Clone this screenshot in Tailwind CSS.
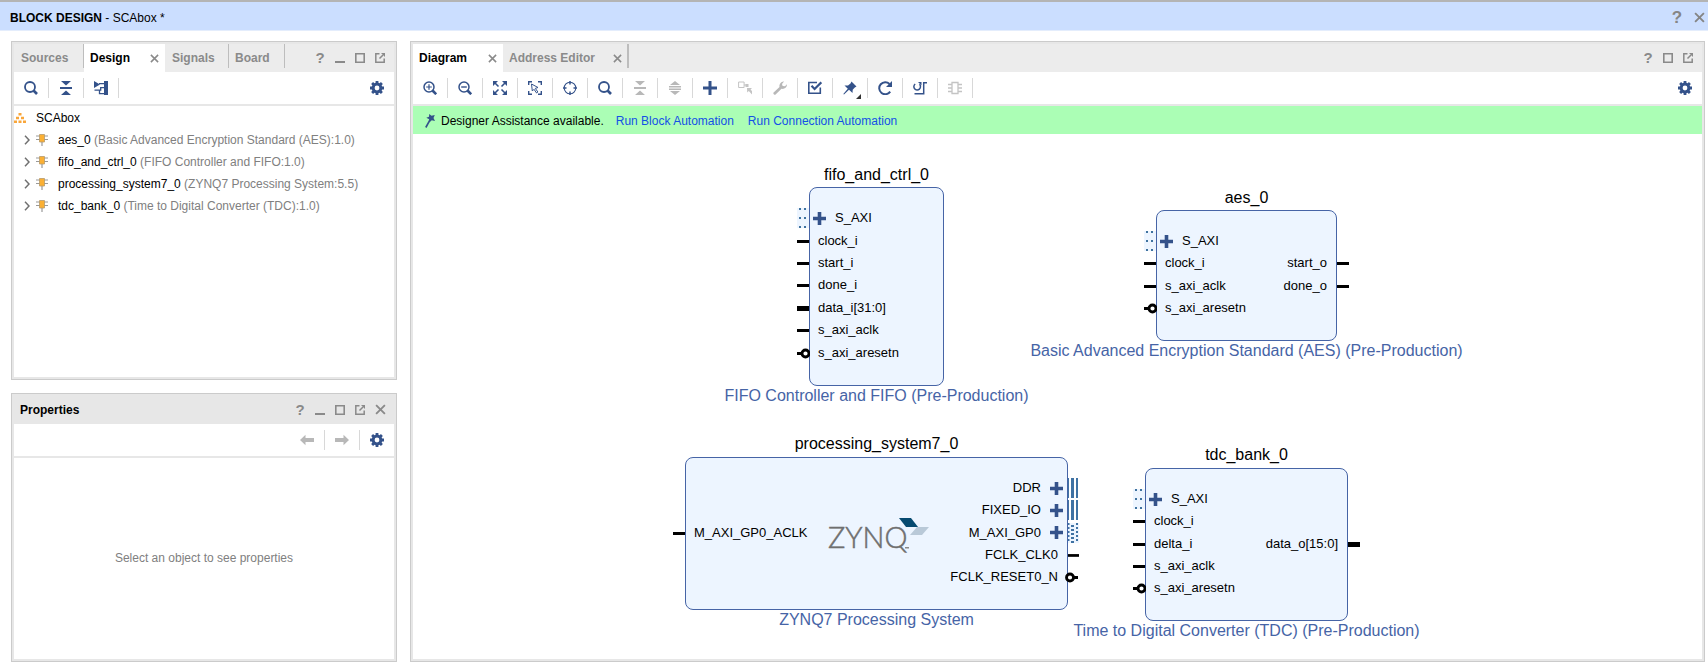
<!DOCTYPE html>
<html lang="en">
<head>
<meta charset="utf-8">
<meta name="viewport" content="width=device-width, initial-scale=1">
<title>Block Design - SCAbox</title>
<script src="https://cdn.jsdelivr.net/npm/@tailwindcss/browser@4"></script>
</head>
<body class="flex min-h-screen flex-col bg-white font-['Liberation_Sans',Arial,sans-serif] text-[12px] leading-4 text-black">

<svg class="hidden" aria-hidden="true">
  <symbol id="search" viewBox="0 0 14 14"><circle cx="6" cy="6" r="5" fill="none" stroke="currentColor" stroke-width="1.8"/><path d="M9.5 9.5 13 13" stroke="currentColor" stroke-width="2.6"/></symbol>
  <symbol id="zoom-in" viewBox="0 0 14 14"><circle cx="6" cy="6" r="5" fill="none" stroke="currentColor" stroke-width="1.5"/><path d="M9.5 9.5 13.2 13.2" stroke="currentColor" stroke-width="2.6"/><path d="M3.2 6h5.6M6 3.2v5.6" stroke="currentColor" stroke-width="1.2"/></symbol>
  <symbol id="zoom-out" viewBox="0 0 14 14"><circle cx="6" cy="6" r="5" fill="none" stroke="currentColor" stroke-width="1.5"/><path d="M9.5 9.5 13.2 13.2" stroke="currentColor" stroke-width="2.6"/><path d="M3.2 6h5.6" stroke="currentColor" stroke-width="1.4"/></symbol>
  <symbol id="collapse" viewBox="0 0 14 14"><path d="M2 0h10L7 4.6zM2 14h10L7 9.4zM1 6h12v2H1z" fill="currentColor"/></symbol>
  <symbol id="expand" viewBox="0 0 14 14"><path d="M2 4h10L7 0zM2 10h10l-5 4zM1 5h12v1.500H1zM1 7.500h12V9H1z" fill="currentColor"/></symbol>
  <symbol id="hier" viewBox="0 0 14 14"><path d="M0 0v7l6-3.500zM10 0h4v14h-4z" fill="currentColor"/><path d="M5 2.700h6M11 6.700H6.700V9.200H.5M10.500 12.700H5.500V9.500" fill="none" stroke="currentColor" stroke-width="1.300"/></symbol>
  <symbol id="gear" viewBox="0 0 14 14"><circle cx="7" cy="7" r="3.900" fill="none" stroke="currentColor" stroke-width="3"/><path d="M7 0v3M7 11v3M0 7h3M11 7h3M2.100 2.100l2 2M9.900 9.900l2 2M11.900 2.100l-2 2M4.100 9.900l-2 2" stroke="currentColor" stroke-width="2.800"/></symbol>
  <symbol id="fit" viewBox="0 0 14 14"><path d="M0 0h5L0 5zM14 0H9l5 5zM0 14h5L0 9zM14 14H9l5-5z" fill="currentColor"/><path d="M1.500 1.500l4 4M12.500 1.500l-4 4M1.500 12.500l4-4M12.500 12.500l-4-4" stroke="currentColor" stroke-width="1.600"/></symbol>
  <symbol id="select-area" viewBox="0 0 14 14"><path d="M4 .7H.7V4M10 .7h3.300V4M4 13.300H.7V10M10 13.300h3.300V10" fill="none" stroke="currentColor" stroke-width="1.400"/><path d="M3.500 3l6.500 3.500-2.700.9 2.600 3.600-1.300 1-2.600-3.700L4.300 10z" fill="none" stroke="currentColor"/></symbol>
  <symbol id="target" viewBox="0 0 14 14"><circle cx="7" cy="7" r="5.800" fill="none" stroke="currentColor" stroke-width="1.100"/><path d="M7 0v3.500M7 10.500v3.500M0 7h3.500M10.500 7h3.500" stroke="currentColor" stroke-width="1.500"/></symbol>
  <symbol id="plus" viewBox="0 0 14 14"><path d="M7 0v14M0 7h14" stroke="currentColor" stroke-width="3"/></symbol>
  <symbol id="plus-bold" viewBox="0 0 13 13"><path d="M6.500 0v13M0 6.500h13" stroke="currentColor" stroke-width="3.600"/></symbol>
  <symbol id="move" viewBox="0 0 14 14"><path d="M.6 1h5.500v5.500H.6zM6 4h3" fill="none" stroke="currentColor"/><path d="M7.500 3h3v3h-3zM9 7h5l-1.500 1.500L14 10v3.500L10.800 10 9.200 11.500z" fill="currentColor"/></symbol>
  <symbol id="wrench" viewBox="0 0 14 14"><path d="M.6 11.600 6.500 6C6 3.500 7.800.5 11 .5L9 3l.6 2L12 5.200 14 3.200c.2 3.300-2.800 5.300-5.500 4.600L2.600 13.600C1.500 14.500-.4 12.800.6 11.600z" fill="currentColor"/></symbol>
  <symbol id="check" viewBox="0 0 14 14"><path d="M12.300 6.500v5.800H.8V1.500H9" fill="none" stroke="currentColor" stroke-width="1.600"/><path d="M3.500 4.800 6.600 8 13.300 1.400" fill="none" stroke="currentColor" stroke-width="2.200"/></symbol>
  <symbol id="pin" viewBox="0 0 14 14"><path d="M8.500.5 13.500 5.500 11.800 6.500 9.700 8.800 9.500 12 6 8.800 1 13.500.3 12.900 4.800 7.700 1.500 4.500 5 4.500 7.500 2.400z" fill="currentColor"/></symbol>
  <symbol id="refresh" viewBox="0 0 14 14"><path d="M12.200 10.600A6 6 0 1 1 11.500 3" fill="none" stroke="currentColor" stroke-width="2"/><path d="M14 0v6H8z" fill="currentColor"/></symbol>
  <symbol id="relayout" viewBox="0 0 14 14"><path d="M2.200 3A3.300 3.300 0 1 0 6.500 3.300M14 1.700H10.700V12.700H1.500" fill="none" stroke="currentColor" stroke-width="1.500"/><path d="M5 1h3.500v3.500z" fill="currentColor"/></symbol>
  <symbol id="chip-outline" viewBox="0 0 14 14"><path d="M4 1.500h6v11H4zM0 3.500h4M0 7h4M0 10.500h4M10 3.500h4M10 7h4M10 10.500h4" fill="none" stroke="currentColor" stroke-width="1.300"/></symbol>
  <symbol id="close" viewBox="0 0 10 10"><path d="M1 1l8 8M9 1 1 9" stroke="currentColor" stroke-width="1.700"/></symbol>
  <symbol id="min" viewBox="0 0 10 10"><path d="M0 9h10" stroke="currentColor" stroke-width="2"/></symbol>
  <symbol id="max" viewBox="0 0 10 10"><path d="M.8.8h8.400v8.400H.8z" fill="none" stroke="currentColor" stroke-width="1.600"/></symbol>
  <symbol id="popout" viewBox="0 0 10 10"><path d="M4.500.8H.8v8.400h8.400V5.500M4.500 5.500 8 2" fill="none" stroke="currentColor" stroke-width="1.500"/><path d="M6 0h4v4z" fill="currentColor"/></symbol>
  <symbol id="arrow-left" viewBox="0 0 14 12"><path d="M0 6 5.500.8V4H14v4H5.500v3.200z" fill="currentColor"/></symbol>
  <symbol id="arrow-right" viewBox="0 0 14 12"><path d="M14 6 8.500.8V4H0v4h8.500v3.200z" fill="currentColor"/></symbol>
  <symbol id="chevron" viewBox="0 0 6 10"><path d="M1 .8 5 5 1 9.200" fill="none" stroke="#707070" stroke-width="1.500"/></symbol>
  <symbol id="chip" viewBox="0 0 12 12"><path d="M0 2h12M0 5.500h12M6 8v4" stroke="#9a9a9a" stroke-width="1.200"/><path d="M3.500.5h5v7.500h-5z" fill="#fbb034" stroke="#b79a6a" stroke-width=".8"/></symbol>
  <symbol id="design" viewBox="0 0 12 10"><path d="M4.500 0h3v2.600h-3zM2 3.700h3v2.600H2zM7 3.700h3v2.600H7zM0 7.400h3V10H0zM4.500 7.400h3V10h-3zM9 7.400h3V10H9z" fill="#f9a63a"/></symbol>
  <symbol id="wand" viewBox="0 0 10 14"><path d="M4.200 0 6.500 1.800 9.800 1 8.500 4 10 7 6.800 6.300 4.500 8.300 4.200 5.200 1.300 3.800 4 2.800z" fill="currentColor"/><path d="M5.500 5 .8 13.500" stroke="currentColor" stroke-width="1.600"/></symbol>
  <!-- Port connectors -->
  <symbol id="p-wire" viewBox="0 0 12 20"><path d="M0 10.500h12" stroke="#000" stroke-width="3"/></symbol>
  <symbol id="p-vec" viewBox="0 0 12 20"><path d="M0 10.500h12" stroke="#000" stroke-width="5"/></symbol>
  <symbol id="p-slave" viewBox="0 0 12 20"><path d="M0 0h12v20H0z" fill="#edf5ff"/><path d="M2 0h2v2H2zM7 0h2v2H7zM2 9h2v2H2zM7 9h2v2H7zM2 18h2v2H2zM7 18h2v2H7z" fill="#3f729f"/></symbol>
  <symbol id="p-inv" viewBox="0 0 14 20"><path d="M1 10.500h5" stroke="#000" stroke-width="3"/><circle cx="9.500" cy="10.500" r="3.500" fill="#fff" stroke="#000" stroke-width="2.800"/></symbol>
  <symbol id="p-inv-out" viewBox="0 0 14 20"><path d="M9 10.500h4" stroke="#000" stroke-width="3"/><circle cx="5" cy="10.500" r="3.500" fill="#fff" stroke="#000" stroke-width="2.800"/></symbol>
  <symbol id="p-bus" viewBox="0 0 11 20"><path d="M0 0h1v20H0zM3 0h3v20H3zM8 0h2v20H8z" fill="#3f72a3"/></symbol>
  <symbol id="p-master" viewBox="0 0 11 20"><path d="M0 0h11v20H0z" fill="#edf5ff"/><path d="M.5 0v20M9 0v20" fill="none" stroke="#3f72a3" stroke-width="2" stroke-dasharray="2 2"/><path d="M4.500 2v18" stroke="#3f72a3" stroke-width="3" stroke-dasharray="2 2"/></symbol>
</svg>

<header class="flex h-[31px] items-center border-t-2 border-b border-t-[#b4b4b4] border-b-[#e4edfc] bg-[#cbdeff] pt-[3px] pl-2.5 pr-[3px]">
  <h1 class="flex-1"><b>BLOCK DESIGN</b> - SCAbox *</h1>
  <button aria-label="Help" class="mr-[7px] w-5 text-[17px] font-bold text-[#858585]">?</button>
  <button aria-label="Close" class="text-[#858585]"><svg class="size-[11px]"><use href="#close"/></svg></button>
</header>

<main class="flex flex-1 gap-[13px] pt-2.5 pr-[3px] pb-[5px] pl-[11px]">
  <div class="flex w-[386px] shrink-0 flex-col gap-[13px]">

    <section class="flex flex-[339] flex-col border border-[#cbcbcb]"><div class="flex flex-1 flex-col border-2 border-[#e7e7e7]">
      <div class="flex h-7 items-center bg-[#ececec] pr-1 font-bold text-[#8a8a8a]">
        <div role="tablist" class="flex h-7 flex-1">
          <button role="tab" class="mb-1 w-[70px] border-r border-[#bdbdbd] pt-1 pl-[7px] text-left">Sources</button>
          <div class="flex w-[81px] items-center justify-between bg-white pr-[6px] pl-1.5"><button role="tab" aria-selected="true" class="text-black">Design</button><button aria-label="Close Design"><svg class="size-[9px]"><use href="#close"/></svg></button></div>
          <button role="tab" class="mb-1 w-16 border-r border-[#bdbdbd] pt-1 pl-[7px] text-left">Signals</button>
          <button role="tab" class="mb-1 w-14 border-r border-[#bdbdbd] pt-1 pl-[6px] text-left">Board</button>
        </div>
        <button aria-label="Help" class="w-5 text-[15px]">?</button>
        <button aria-label="Minimize" class="flex w-5 justify-center"><svg class="size-2.5"><use href="#min"/></svg></button>
        <button aria-label="Maximize" class="flex w-5 justify-center"><svg class="size-2.5"><use href="#max"/></svg></button>
        <button aria-label="Float" class="flex w-5 justify-center"><svg class="size-2.5"><use href="#popout"/></svg></button>
      </div>
      <div class="flex h-[34px] items-center border-b-2 border-[#e7e7e7] text-[#34528a]">
        <button aria-label="Search" class="flex h-5 w-[35px] items-center justify-center border-r border-[#d8d8d8]"><svg class="size-3.5"><use href="#search"/></svg></button>
        <button aria-label="Collapse all" class="flex h-5 w-[35px] items-center justify-center border-r border-[#d8d8d8]"><svg class="size-3.5"><use href="#collapse"/></svg></button>
        <button aria-label="Show hierarchy" class="flex h-5 w-[35px] items-center justify-center border-r border-[#d8d8d8]"><svg class="size-3.5"><use href="#hier"/></svg></button>
        <button aria-label="Settings" class="mr-2.5 ml-auto"><svg class="size-3.5"><use href="#gear"/></svg></button>
      </div>
      <ul class="flex-1 whitespace-nowrap text-[#808080]">
        <li class="flex h-[22px] items-center gap-2.5 pt-0.5 text-black"><svg class="h-2.5 w-3"><use href="#design"/></svg>SCAbox</li>
        <li class="flex h-[22px] items-center pt-0.5 pl-2.5"><button aria-label="Expand aes_0" class="mr-1.5"><svg class="h-2.5 w-1.5"><use href="#chevron"/></svg></button><svg class="mr-2.5 size-3"><use href="#chip"/></svg><span><span class="text-black">aes_0</span> (Basic Advanced Encryption Standard (AES):1.0)</span></li>
        <li class="flex h-[22px] items-center pt-0.5 pl-2.5"><button aria-label="Expand fifo_and_ctrl_0" class="mr-1.5"><svg class="h-2.5 w-1.5"><use href="#chevron"/></svg></button><svg class="mr-2.5 size-3"><use href="#chip"/></svg><span><span class="text-black">fifo_and_ctrl_0</span> (FIFO Controller and FIFO:1.0)</span></li>
        <li class="flex h-[22px] items-center pt-0.5 pl-2.5"><button aria-label="Expand processing_system7_0" class="mr-1.5"><svg class="h-2.5 w-1.5"><use href="#chevron"/></svg></button><svg class="mr-2.5 size-3"><use href="#chip"/></svg><span><span class="text-black">processing_system7_0</span> (ZYNQ7 Processing System:5.5)</span></li>
        <li class="flex h-[22px] items-center pt-0.5 pl-2.5"><button aria-label="Expand tdc_bank_0" class="mr-1.5"><svg class="h-2.5 w-1.5"><use href="#chevron"/></svg></button><svg class="mr-2.5 size-3"><use href="#chip"/></svg><span><span class="text-black">tdc_bank_0</span> (Time to Digital Converter (TDC):1.0)</span></li>
      </ul>
    </div></section>

    <section class="flex flex-[269] flex-col border border-[#cbcbcb]"><div class="flex flex-1 flex-col border-2 border-[#e7e7e7]">
      <div class="flex h-7 items-center bg-[#e7e7e7] pr-1 pl-1.5 text-[#8a8a8a]">
        <h2 class="flex-1 font-bold text-black">Properties</h2>
        <button aria-label="Help" class="w-5 text-[15px] font-bold">?</button>
        <button aria-label="Minimize" class="flex w-5 justify-center"><svg class="size-2.5"><use href="#min"/></svg></button>
        <button aria-label="Maximize" class="flex w-5 justify-center"><svg class="size-2.5"><use href="#max"/></svg></button>
        <button aria-label="Float" class="flex w-5 justify-center"><svg class="size-2.5"><use href="#popout"/></svg></button>
        <button aria-label="Close" class="flex w-5 justify-center"><svg class="size-[11px]"><use href="#close"/></svg></button>
      </div>
      <div class="flex h-[34px] items-center justify-end border-b-2 border-[#e7e7e7] text-[#b8b8b8]">
        <button aria-label="Back" class="flex h-5 w-[35px] items-center justify-center border-r border-[#d8d8d8]"><svg class="h-3 w-3.5"><use href="#arrow-left"/></svg></button>
        <button aria-label="Forward" class="flex h-5 w-[35px] items-center justify-center border-r border-[#d8d8d8]"><svg class="h-3 w-3.5"><use href="#arrow-right"/></svg></button>
        <button aria-label="Settings" class="mx-2.5 text-[#34528a]"><svg class="size-3.5"><use href="#gear"/></svg></button>
      </div>
      <p class="flex flex-1 items-center justify-center text-[#808080]">Select an object to see properties</p>
    </div></section>
  </div>

  <section class="flex min-w-0 flex-1 flex-col border border-[#cbcbcb]"><div class="flex flex-1 flex-col border-2 border-[#e7e7e7]">
    <div class="flex h-7 items-center bg-[#ececec] pr-1 font-bold text-[#8a8a8a]">
      <div role="tablist" class="flex h-7 flex-1">
        <div class="flex w-[90px] items-center justify-between bg-white pr-[6px] pl-1.5"><button role="tab" aria-selected="true" class="text-black">Diagram</button><button aria-label="Close Diagram"><svg class="size-[9px]"><use href="#close"/></svg></button></div>
        <div class="mb-1 flex w-[126px] items-center justify-between border-r-2 border-[#bdbdbd] pt-1 pr-[5px] pl-1.5"><button role="tab">Address Editor</button><button aria-label="Close Address Editor"><svg class="size-[9px]"><use href="#close"/></svg></button></div>
      </div>
      <button aria-label="Help" class="w-5 text-[15px]">?</button>
      <button aria-label="Maximize" class="flex w-5 justify-center"><svg class="size-2.5"><use href="#max"/></svg></button>
      <button aria-label="Float" class="flex w-5 justify-center"><svg class="size-2.5"><use href="#popout"/></svg></button>
    </div>
    <div class="flex h-[34px] items-center border-b-2 border-[#e7e7e7] text-[#34528a]">
      <button aria-label="Zoom in" class="flex h-5 w-[35px] items-center justify-center border-r border-[#d8d8d8]"><svg class="size-3.5"><use href="#zoom-in"/></svg></button>
      <button aria-label="Zoom out" class="flex h-5 w-[35px] items-center justify-center border-r border-[#d8d8d8]"><svg class="size-3.5"><use href="#zoom-out"/></svg></button>
      <button aria-label="Zoom fit" class="flex h-5 w-[35px] items-center justify-center border-r border-[#d8d8d8]"><svg class="size-3.5"><use href="#fit"/></svg></button>
      <button aria-label="Select area" class="flex h-5 w-[35px] items-center justify-center border-r border-[#d8d8d8]"><svg class="size-3.5"><use href="#select-area"/></svg></button>
      <button aria-label="Fit selection" class="flex h-5 w-[35px] items-center justify-center border-r border-[#d8d8d8]"><svg class="size-3.5"><use href="#target"/></svg></button>
      <button aria-label="Search" class="flex h-5 w-[35px] items-center justify-center border-r border-[#d8d8d8]"><svg class="size-3.5"><use href="#search"/></svg></button>
      <button aria-label="Collapse all" class="flex h-5 w-[35px] items-center justify-center border-r border-[#d8d8d8] text-[#b8b8b8]"><svg class="size-3.5"><use href="#collapse"/></svg></button>
      <button aria-label="Expand all" class="flex h-5 w-[35px] items-center justify-center border-r border-[#d8d8d8] text-[#b8b8b8]"><svg class="size-3.5"><use href="#expand"/></svg></button>
      <button aria-label="Add IP" class="flex h-5 w-[35px] items-center justify-center border-r border-[#d8d8d8]"><svg class="size-3.5"><use href="#plus"/></svg></button>
      <button aria-label="Make external" class="flex h-5 w-[35px] items-center justify-center border-r border-[#d8d8d8] text-[#c4c4c4]"><svg class="size-3.5"><use href="#move"/></svg></button>
      <button aria-label="Customize block" class="flex h-5 w-[35px] items-center justify-center border-r border-[#d8d8d8] text-[#b8b8b8]"><svg class="size-3.5"><use href="#wrench"/></svg></button>
      <button aria-label="Validate design" class="flex h-5 w-[35px] items-center justify-center border-r border-[#d8d8d8]"><svg class="size-3.5"><use href="#check"/></svg></button>
      <button aria-label="Pin" class="relative flex h-5 w-[35px] items-center justify-center border-r border-[#d8d8d8]"><svg class="size-3.5"><use href="#pin"/></svg><svg class="absolute right-[6px] -bottom-px size-[5px]" viewBox="0 0 5 5"><path d="M5 0v5H0z" fill="#333"/></svg></button>
      <button aria-label="Regenerate" class="flex h-5 w-[35px] items-center justify-center border-r border-[#d8d8d8]"><svg class="size-3.5"><use href="#refresh"/></svg></button>
      <button aria-label="Optimize routing" class="flex h-5 w-[35px] items-center justify-center border-r border-[#d8d8d8]"><svg class="size-3.5"><use href="#relayout"/></svg></button>
      <button aria-label="Interface ports" class="flex h-5 w-[35px] items-center justify-center border-r border-[#d8d8d8] text-[#c4c4c4]"><svg class="size-3.5"><use href="#chip-outline"/></svg></button>
      <button aria-label="Settings" class="mr-2.5 ml-auto"><svg class="size-3.5"><use href="#gear"/></svg></button>
    </div>
    <div class="flex h-7 items-center bg-[#abfeb5] pt-0.5 pl-3">
      <svg class="mr-1.5 h-3.5 w-2.5 text-[#34528a]"><use href="#wand"/></svg>
      <p>Designer Assistance available.</p>
      <a href="#block" class="ml-3 text-[#1450e6]">Run Block Automation</a>
      <a href="#connection" class="ml-3.5 text-[#1450e6]">Run Connection Automation</a>
    </div>

    <!-- Block diagram canvas -->
    <div class="relative min-h-[520px] flex-1 overflow-hidden text-[13px]">

      <figure class="absolute top-[29px] left-[396px] flex w-[135px] flex-col items-center whitespace-nowrap">
        <div class="h-6 text-[16px] leading-6">fifo_and_ctrl_0</div>
        <div class="flex h-[199px] w-full flex-col rounded-lg border border-[#4664a6] bg-[#edf5ff] pt-[19px] pb-[21px]">
          <div class="relative flex flex-1 items-center gap-[9px] pl-[3px]"><svg class="absolute right-full mr-px h-5 w-3"><use href="#p-slave"/></svg><svg class="size-[13px] text-[#34528a]"><use href="#plus-bold"/></svg>S_AXI</div>
          <div class="relative flex flex-1 items-center pl-2"><svg class="absolute right-full mr-px h-5 w-3"><use href="#p-wire"/></svg>clock_i</div>
          <div class="relative flex flex-1 items-center pl-2"><svg class="absolute right-full mr-px h-5 w-3"><use href="#p-wire"/></svg>start_i</div>
          <div class="relative flex flex-1 items-center pl-2"><svg class="absolute right-full mr-px h-5 w-3"><use href="#p-wire"/></svg>done_i</div>
          <div class="relative flex flex-1 items-center pl-2"><svg class="absolute right-full mr-px h-5 w-3"><use href="#p-vec"/></svg>data_i[31:0]</div>
          <div class="relative flex flex-1 items-center pl-2"><svg class="absolute right-full mr-px h-5 w-3"><use href="#p-wire"/></svg>s_axi_aclk</div>
          <div class="relative flex flex-1 items-center pl-2"><svg class="absolute right-full h-5 w-3.5"><use href="#p-inv"/></svg>s_axi_aresetn</div>
        </div>
        <figcaption class="text-[16px] leading-5 text-[#4664a6]">FIFO Controller and FIFO (Pre-Production)</figcaption>
      </figure>

      <figure class="absolute top-[52px] left-[743px] flex w-[181px] flex-col items-center whitespace-nowrap">
        <div class="h-6 text-[16px] leading-6">aes_0</div>
        <div class="flex h-[131px] w-full flex-col rounded-lg border border-[#4664a6] bg-[#edf5ff] pt-[19px] pb-[21px]">
          <div class="relative flex flex-1 items-center gap-[9px] pl-[3px]"><svg class="absolute right-full mr-px h-5 w-3"><use href="#p-slave"/></svg><svg class="size-[13px] text-[#34528a]"><use href="#plus-bold"/></svg>S_AXI</div>
          <div class="relative flex flex-1 items-center justify-between pr-[9px] pl-2"><svg class="absolute right-full mr-px h-5 w-3"><use href="#p-wire"/></svg><span>clock_i</span><span>start_o</span><svg class="absolute left-full ml-px h-5 w-3"><use href="#p-wire"/></svg></div>
          <div class="relative flex flex-1 items-center justify-between pr-[9px] pl-2"><svg class="absolute right-full mr-px h-5 w-3"><use href="#p-wire"/></svg><span>s_axi_aclk</span><span>done_o</span><svg class="absolute left-full ml-px h-5 w-3"><use href="#p-wire"/></svg></div>
          <div class="relative flex flex-1 items-center pl-2"><svg class="absolute right-full h-5 w-3.5"><use href="#p-inv"/></svg>s_axi_aresetn</div>
        </div>
        <figcaption class="text-[16px] leading-5 text-[#4664a6]">Basic Advanced Encryption Standard (AES) (Pre-Production)</figcaption>
      </figure>

      <figure class="absolute top-[299px] left-[272px] flex w-[383px] flex-col items-center whitespace-nowrap">
        <div class="h-6 text-[16px] leading-[22px]">processing_system7_0</div>
        <div class="flex h-[153px] w-full flex-col rounded-lg border border-[#4664a6] bg-[#edf5ff] pt-[19px] pb-[21px]">
          <div class="relative flex flex-1 items-center justify-end gap-[9px] pr-1"><span>DDR</span><svg class="size-[13px] text-[#34528a]"><use href="#plus-bold"/></svg><svg class="absolute left-full ml-px h-5 w-[11px]"><use href="#p-bus"/></svg></div>
          <div class="relative flex flex-1 items-center justify-end gap-[9px] pr-1"><span>FIXED_IO</span><svg class="size-[13px] text-[#34528a]"><use href="#plus-bold"/></svg><svg class="absolute left-full ml-px h-5 w-[11px]"><use href="#p-bus"/></svg></div>
          <div class="relative flex flex-1 items-center gap-[9px] pr-1 pl-2"><svg class="absolute right-full mr-px h-5 w-3"><use href="#p-wire"/></svg><span>M_AXI_GP0_ACLK</span>
            <svg class="-my-3 ml-3 h-10 w-[102px] overflow-visible" viewBox="0 -4 102 40" role="img" aria-label="ZYNQ"><text x="0" y="31" stroke="#6f6f6f" stroke-width=".5" class="fill-[#6f6f6f] font-['Lato',sans-serif] text-[29px] font-light">ZYNQ</text><path d="M71 1h12l7 9H78z" fill="#064a70"/><path d="M89 10h12l-7 8H82z" fill="#b9c9d8"/><path d="M77 30h4v1.500h-4z" fill="#8a8a8a"/></svg>
            <span class="ml-auto">M_AXI_GP0</span><svg class="size-[13px] text-[#34528a]"><use href="#plus-bold"/></svg><svg class="absolute left-full ml-px h-5 w-[11px]"><use href="#p-master"/></svg></div>
          <div class="relative flex flex-1 items-center justify-end pr-[9px]"><span>FCLK_CLK0</span><svg class="absolute left-full ml-px h-5 w-[11px]"><use href="#p-wire"/></svg></div>
          <div class="relative flex flex-1 items-center justify-end pr-[9px]"><span>FCLK_RESET0_N</span><svg class="absolute left-full -ml-0.5 h-5 w-3.5"><use href="#p-inv-out"/></svg></div>
        </div>
        <figcaption class="text-[16px] leading-5 text-[#4664a6]">ZYNQ7 Processing System</figcaption>
      </figure>

      <figure class="absolute top-[310px] left-[732px] flex w-[203px] flex-col items-center whitespace-nowrap">
        <div class="h-6 text-[16px] leading-[22px]">tdc_bank_0</div>
        <div class="flex h-[153px] w-full flex-col rounded-lg border border-[#4664a6] bg-[#edf5ff] pt-[19px] pb-[21px]">
          <div class="relative flex flex-1 items-center gap-[9px] pl-[3px]"><svg class="absolute right-full mr-px h-5 w-3"><use href="#p-slave"/></svg><svg class="size-[13px] text-[#34528a]"><use href="#plus-bold"/></svg>S_AXI</div>
          <div class="relative flex flex-1 items-center pl-2"><svg class="absolute right-full mr-px h-5 w-3"><use href="#p-wire"/></svg>clock_i</div>
          <div class="relative flex flex-1 items-center justify-between pr-[9px] pl-2"><svg class="absolute right-full mr-px h-5 w-3"><use href="#p-wire"/></svg><span>delta_i</span><span>data_o[15:0]</span><svg class="absolute left-full ml-px h-5 w-3"><use href="#p-vec"/></svg></div>
          <div class="relative flex flex-1 items-center pl-2"><svg class="absolute right-full mr-px h-5 w-3"><use href="#p-wire"/></svg>s_axi_aclk</div>
          <div class="relative flex flex-1 items-center pl-2"><svg class="absolute right-full h-5 w-3.5"><use href="#p-inv"/></svg>s_axi_aresetn</div>
        </div>
        <figcaption class="text-[16px] leading-5 text-[#4664a6]">Time to Digital Converter (TDC) (Pre-Production)</figcaption>
      </figure>
    </div>
  </div></section>
</main>
</body>
</html>
